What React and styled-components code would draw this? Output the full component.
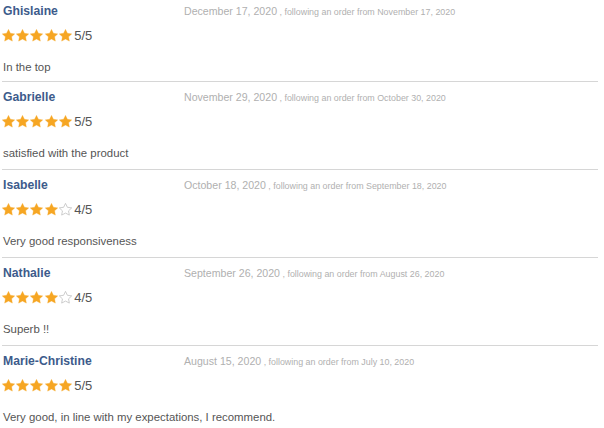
import styled, { createGlobalStyle } from "styled-components"

const reviews = [
    { name: "Ghislaine", date: "December 17, 2020", order: "November 17, 2020", rating: 5, text: "In the top" },
    { name: "Gabrielle", date: "November 29, 2020", order: "October 30, 2020", rating: 5, text: "satisfied with the product" },
    { name: "Isabelle", date: "October 18, 2020", order: "September 18, 2020", rating: 4, text: "Very good responsiveness" },
    { name: "Nathalie", date: "September 26, 2020", order: "August 26, 2020", rating: 4, text: "Superb !!" },
    { name: "Marie-Christine", date: "August 15, 2020", order: "July 10, 2020", rating: 5, text: "Very good, in line with my expectations, I recommend." },
]

function Star({ filled }) {
    return (
        <StarIcon viewBox="2 2 20 20" aria-hidden="true">
            <path
                d="M12 2.6l2.9 6 6.6.9-4.8 4.6 1.2 6.5L12 17.5l-5.9 3.1 1.2-6.5-4.8-4.6 6.6-.9z"
                fill={filled ? "#f6a623" : "none"}
                stroke={filled ? "#f6a623" : "#c4c4c4"}
                strokeWidth={filled ? 0.6 : 1.3}
                strokeLinejoin="round"
            />
        </StarIcon>
    )
}

export default function App() {
    return (
        <>
            <GlobalStyle />
            <ReviewList>
                {reviews.map((r) => (
                    <Review key={r.name}>
                        <Header>
                            <Author>{r.name}</Author>
                            <DateLine>
                                {r.date}
                                <OrderNote> , following an order from {r.order}</OrderNote>
                            </DateLine>
                        </Header>
                        <Rating>
                            <Stars>
                                {[1, 2, 3, 4, 5].map((n) => (
                                    <Star key={n} filled={n <= r.rating} />
                                ))}
                            </Stars>
                            <Score>{r.rating}/5</Score>
                        </Rating>
                        <Comment>{r.text}</Comment>
                    </Review>
                ))}
            </ReviewList>
        </>
    )
}

const GlobalStyle = createGlobalStyle`
    body {
        margin: 0;
        background: #ffffff;
        font-family: "Liberation Sans", Arial, sans-serif;
    }
`
const ReviewList = styled.div`
    width: 596px;
    padding-left: 2px;
    display: flex;
    flex-direction: column;
`
const Review = styled.div`
    border-top: 1px solid #d6d6d6;
    padding: 7px 0 8px 1px;
    &:first-child {
        border-top: none;
        padding-top: 3px;
        padding-bottom: 6px;
    }
`
const Header = styled.div`
    display: flex;
    align-items: baseline;
    height: 16px;
    line-height: 16px;
`
const Author = styled.div`
    width: 181px;
    flex-shrink: 0;
    font-size: 12.2px;
    font-weight: bold;
    color: #3d5b8b;
`
const DateLine = styled.div`
    font-size: 10.6px;
    color: #b0b0b0;
    white-space: nowrap;
`
const OrderNote = styled.span`
    font-size: 8.9px;
`
const Rating = styled.div`
    display: flex;
    align-items: center;
    height: 20px;
    margin-top: 6px;
    margin-left: -1px;
`
const Stars = styled.div`
    display: flex;
    gap: 1.2px;
`
const StarIcon = styled.svg`
    width: 13px;
    height: 13px;
    display: block;
`
const Score = styled.span`
    margin-left: 2.5px;
    font-size: 13px;
    color: #555555;
`
const Comment = styled.div`
    margin-top: 14px;
    font-size: 11.4px;
    line-height: 16px;
    color: #555555;
`
